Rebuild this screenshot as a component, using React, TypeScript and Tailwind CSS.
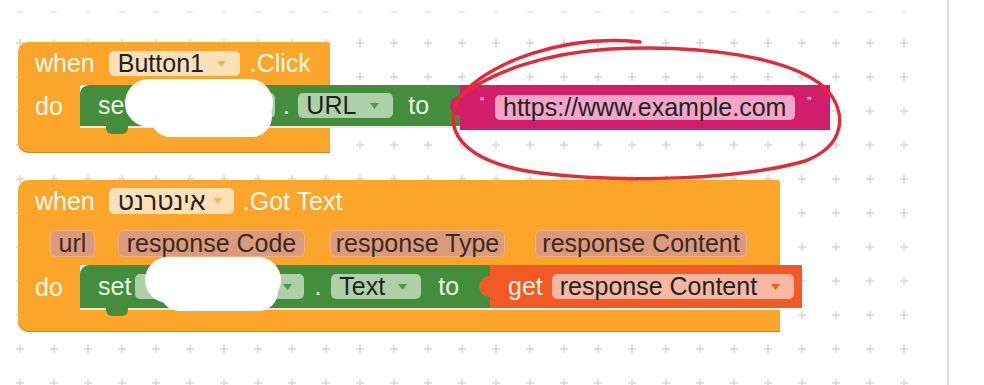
import React from "react";

const ORANGE = "bg-[#fba52b]";

function Arrow({ color }: { color: string }) {
  return (
    <svg width="9" height="6" viewBox="0 0 9 6" className="shrink-0">
      <path d="M0 0 H9 L4.5 6 Z" fill={color} />
    </svg>
  );
}

function Blob({ className }: { className: string }) {
  return <div className={"absolute bg-white " + className} />;
}

const params = [
  { label: "url", cls: "w-[45px]" },
  { label: "response Code", cls: "ml-[23px] w-[187px]" },
  { label: "response Type", cls: "ml-[25px] w-[175px]" },
  { label: "response Content", cls: "ml-[30px] w-[212px]" },
];

export default function App() {
  return (
    <div className="relative flex h-[385px] w-[984px] overflow-hidden bg-white font-['Liberation_Sans',Arial,sans-serif] text-[25px] leading-none">
      {/* workspace */}
      <div className="relative h-full w-[949px] border-r-2 border-[#e2e2e2]">
        <svg className="absolute left-0 top-0" width="920" height="385">
          <defs>
            <pattern id="grid" x="3" y="26" width="34" height="34" patternUnits="userSpaceOnUse">
              <path d="M13 17 H21 M17 13 V21" stroke="#d6d6d6" strokeWidth="1.6" />
            </pattern>
            <pattern id="dash" x="3" y="-5" width="34" height="34" patternUnits="userSpaceOnUse">
              <path d="M14 17 H20" stroke="#e0e0e0" strokeWidth="1.4" />
            </pattern>
          </defs>
          <rect y="26" width="920" height="359" fill="url(#grid)" />
          <rect y="6" width="920" height="10" fill="url(#dash)" />
        </svg>

        {/* Button1.Click */}
        <div className="absolute left-[18px] top-[42px] flex flex-col">
          <div className={"flex h-[43px] w-[312px] items-center rounded-tl-[10px] rounded-tr-[2px] pl-[17px] text-[#fffaf0] " + ORANGE}>
            <span>when</span>
            <div className="ml-[14px] flex h-[25px] w-[131px] items-center justify-between rounded-[5px] bg-[#fde0b8] pl-[9px] pr-[14px] text-[#222]">
              <span>Button1</span>
              <Arrow color="#f6b35c" />
            </div>
            <span className="ml-[10px]">.Click</span>
          </div>
          <div className="flex h-[43px]">
            <div className={"flex w-[62px] items-center pl-[17px] text-[#fffaf0] " + ORANGE}>do</div>
            <div className="relative flex h-[43px] w-[380px] items-center rounded-tl-[9px] border-b-2 border-[#dfeedd] bg-[#438d3c] pl-[18px] text-[#eaf6e4]">
              <div className="absolute -bottom-[8px] left-[26px] h-[8px] w-[22px] rounded-b-[6px] bg-[#438d3c]" />
              <span>set</span>
              <div className="ml-[4px] h-[25px] w-[140px] rounded-[5px] bg-[#aed0a6]" />
              <span className="w-[22px] text-center">.</span>
              <div className="ml-[1px] flex h-[25px] w-[95px] items-center justify-between rounded-[5px] bg-[#aed0a6] pl-[8px] pr-[14px] text-[#222]">
                <span>URL</span>
                <Arrow color="#4f9a4a" />
              </div>
              <span className="ml-[15px]">to</span>
            </div>
            <div className="relative flex h-[45px] w-[370px] items-center bg-[#d11d6b] pl-[20px] text-white">
              <div className="absolute -left-[10px] top-[11px] h-[20px] w-[10px] rounded-l-full bg-[#d11d6b]" />
              <span className="w-[15px] self-start pt-[10px] text-[13px]">“</span>
              <div className="flex h-[25px] w-[300px] items-center rounded-[5px] bg-[#f2a5c7] pl-[8px] text-[#222]">
                https://www.example.com
              </div>
              <span className="ml-[12px] self-start pt-[10px] text-[13px]">”</span>
            </div>
          </div>
          <div className={"h-[24px] w-[312px] rounded-bl-[10px] shadow-[0_1px_0_#d4861e] " + ORANGE} />
        </div>
        <Blob className="left-[125px] top-[79px] h-[48px] w-[148px] rounded-[26px]" />
        <Blob className="left-[150px] top-[96px] h-[41px] w-[122px] rounded-[22px]" />

        {/* אינטרנט.GotText */}
        <div className="absolute left-[18px] top-[180px] flex flex-col">
          <div className={"flex h-[42px] w-[762px] items-center rounded-tl-[10px] rounded-tr-[2px] pl-[17px] text-[#fffaf0] " + ORANGE}>
            <span>when</span>
            <div className="ml-[14px] flex h-[26px] w-[125px] items-center justify-between rounded-[5px] bg-[#fde0b8] pl-[9px] pr-[12px] text-[#222]">
              <span dir="rtl">אינטרנט</span>
              <Arrow color="#f6b35c" />
            </div>
            <span className="ml-[9px]">.Got Text</span>
          </div>
          <div className={"flex h-[43px] w-[762px] items-center pl-[32px] text-[#3b2a22] " + ORANGE}>
            {params.map((p) => (
              <span
                key={p.label}
                className={"flex h-[27px] items-center justify-center rounded-[6px] border border-[#eab08a] bg-[#dc9a7c] " + p.cls}
              >
                {p.label}
              </span>
            ))}
          </div>
          <div className="flex h-[45px]">
            <div className={"flex w-[62px] items-center pl-[17px] text-[#fffaf0] " + ORANGE}>do</div>
            <div className="relative flex h-[45px] w-[410px] items-center rounded-tl-[9px] border-b-2 border-[#dfeedd] bg-[#438d3c] pl-[18px] text-[#eaf6e4]">
              <div className="absolute -bottom-[8px] left-[26px] h-[8px] w-[22px] rounded-b-[6px] bg-[#438d3c]" />
              <span>set</span>
              <div className="ml-[4px] flex h-[25px] w-[169px] items-center justify-end rounded-[5px] bg-[#aed0a6] pr-[12px]">
                <Arrow color="#4f9a4a" />
              </div>
              <span className="w-[27px] text-center">.</span>
              <div className="flex h-[25px] w-[90px] items-center justify-between rounded-[5px] bg-[#aed0a6] pl-[8px] pr-[14px] text-[#222]">
                <span>Text</span>
                <Arrow color="#4f9a4a" />
              </div>
              <span className="ml-[17px]">to</span>
            </div>
            <div className="relative flex h-[43px] w-[312px] items-center bg-[#f15a24] pl-[18px] text-[#fff3ea]">
              <div className="absolute -left-[11px] top-[11px] h-[21px] w-[11px] rounded-l-full bg-[#f15a24]" />
              <span>get</span>
              <div className="ml-[9px] flex h-[25px] w-[242px] items-center justify-between rounded-[5px] bg-[#f9b6a2] pl-[8px] pr-[14px] text-[#222]">
                <span>response Content</span>
                <Arrow color="#f15a24" />
              </div>
            </div>
          </div>
          <div className={"h-[21px] w-[762px] rounded-bl-[10px] shadow-[0_1px_0_#d4861e] " + ORANGE} />
        </div>
        <Blob className="left-[145px] top-[257px] h-[46px] w-[136px] rounded-[24px]" />
        <Blob className="left-[160px] top-[272px] h-[39px] w-[118px] rounded-[20px]" />

        {/* red hand-drawn circle */}
        <svg className="absolute left-0 top-0" width="949" height="385">
          <path
            d="M640 42 C565 34 488 62 460 97 C442 125 456 162 540 173 C620 183 740 180 805 161 C845 146 849 112 824 87 C790 57 700 44 610 49 C545 53 490 72 460 97"
            fill="none"
            stroke="#df2c38"
            strokeWidth="3.5"
            strokeLinecap="round"
          />
        </svg>
      </div>
      <div className="flex-1 bg-white" />
    </div>
  );
}
